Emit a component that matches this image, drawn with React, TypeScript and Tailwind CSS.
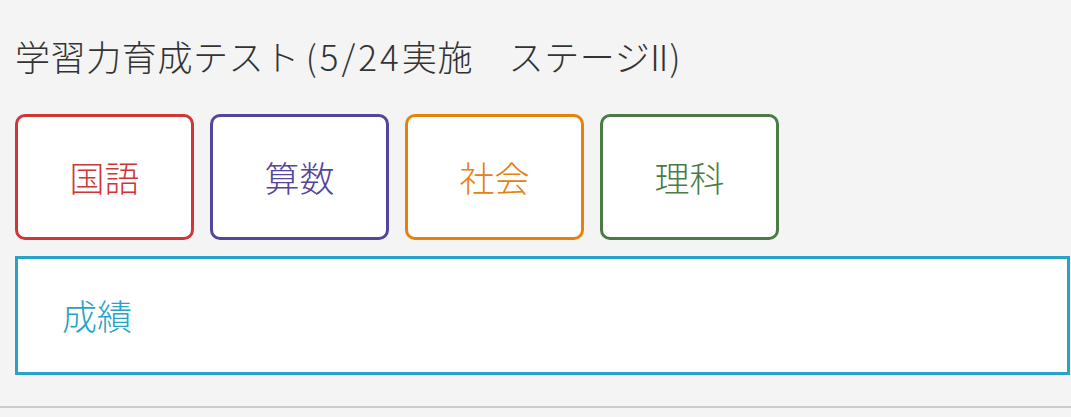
import React from 'react';

const SUBJECTS = [
  { id: 'kokugo', label: '国語', box: 'border-[#cf3636] text-[#cf3636]' },
  { id: 'sansu', label: '算数', box: 'border-[#54449c] text-[#54449c]' },
  { id: 'shakai', label: '社会', box: 'border-[#e6820c] text-[#e6820c]' },
  { id: 'rika', label: '理科', box: 'border-[#4a7a46] text-[#4a7a46]' },
];

export default function App() {
  return (
    <div className="min-h-[417px] bg-[#f4f4f4] font-['Noto_Sans_CJK_JP','Noto_Sans',sans-serif] font-light">
      <div className="pl-[15px] pr-[1px] pt-[31px]">
        {/* Page title */}
        <h1 className="h-[50px] text-[35px] leading-[50px] text-[#333333] font-light tracking-[0.6px] whitespace-nowrap">
          学習力育成テスト
          <span className="ml-[6px] tracking-[3px]">(5/24</span>
          実施　ステージ
          <span className="tracking-[-1px]">II</span>
          <span className="ml-[2px]">)</span>
        </h1>

        {/* Subject tiles */}
        <div className="mt-[33px] flex gap-[16px]">
          {SUBJECTS.map((s) => (
            <button
              key={s.id}
              className={`w-[179px] h-[126px] rounded-[10px] border-[3px] bg-white flex items-center justify-center text-[35px] font-light ${s.box}`}
            >
              {s.label}
            </button>
          ))}
        </div>

        {/* Results panel */}
        <div className="mt-[16px] h-[119px] border-[3px] border-[#28a2c7] bg-white flex items-center pl-[44px]">
          <span className="text-[35px] text-[#28a2c7] font-light">成績</span>
        </div>
      </div>

      <div className="mt-[31px] h-[2px] bg-[#cccccc]" />
    </div>
  );
}
